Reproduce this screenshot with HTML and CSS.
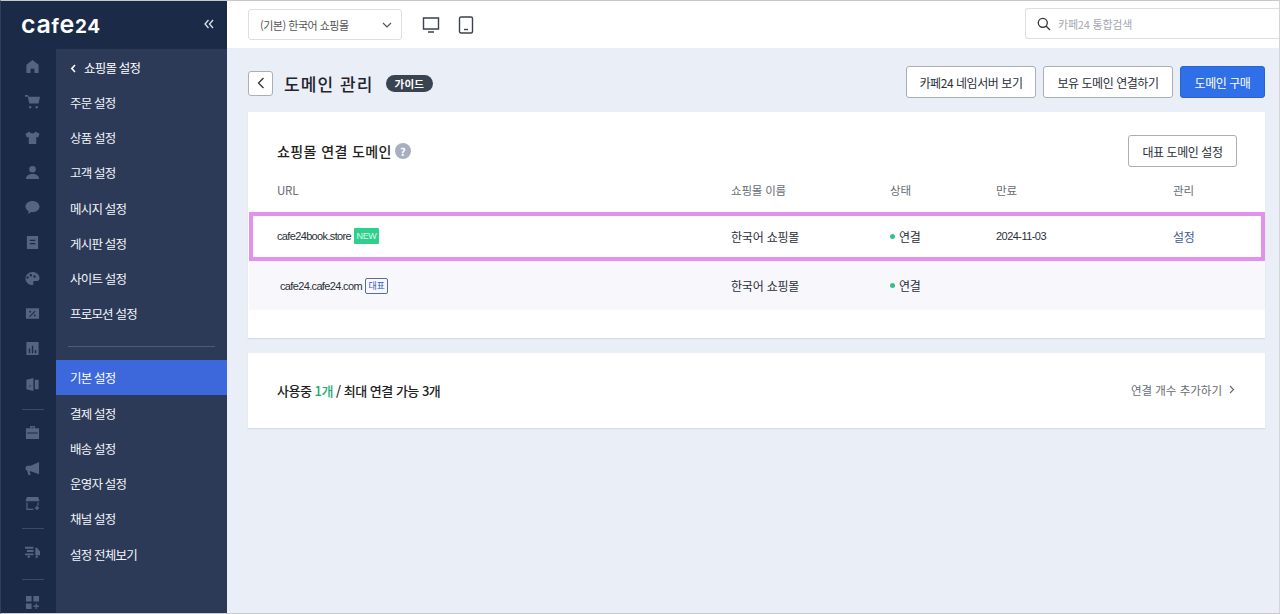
FILE: index.html
```html
<!DOCTYPE html>
<html lang="ko">
<head>
  <meta charset="UTF-8">
  <meta name="viewport" content="width=device-width, initial-scale=1.0">
  <title>도메인 관리</title>
  <link rel="stylesheet" href="styles.css">
</head>
<body>
  <div class="app">
    <aside class="sidebar">
      <div class="brand">
        <span class="logo">ca<i>f</i>e<i>24</i></span>
        <svg class="collapse" width="10" height="10" viewBox="0 0 10 10"><path d="M4.500 1 1 5l3.500 4M9 1 5.500 5 9 9" fill="none" stroke="#dfe4ee" stroke-width="1.300"/></svg>
      </div>
      <div class="side-body">
        <div class="rail">
          <svg class="ri" viewBox="0 0 16 16"><path d="M8 1 1.500 6v9H6v-4.500h4V15h4.500V6z"/></svg>
          <svg class="ri" viewBox="0 0 16 16"><path d="M0 1h3l1 2h12l-1.500 7H4.500L3 3H0z"/><circle cx="5.500" cy="14" r="1.300"/><circle cx="12.500" cy="14" r="1.300"/></svg>
          <svg class="ri" viewBox="0 0 16 16"><path d="M5 1.500 0.500 4 2 8l2-.5V15h8V7.500L14 8l1.500-4L11 1.500C10.500 3 9.500 3.500 8 3.500S5.500 3 5 1.500z"/></svg>
          <svg class="ri" viewBox="0 0 16 16"><circle cx="8" cy="4.500" r="3.500"/><path d="M1 15c0-4 3-5.500 7-5.500s7 1.500 7 5.500z"/></svg>
          <svg class="ri" viewBox="0 0 16 16"><path d="M8 1C3.800 1 .5 3.500.5 7c0 2.200 1.300 4 3.300 5l-.3 3 3.200-2.100c.4.100.9.100 1.300.1 4.200 0 7.500-2.600 7.500-6S12.200 1 8 1z"/></svg>
          <svg class="ri" viewBox="0 0 16 16"><path fill-rule="evenodd" d="M2 1h12v14H2zM5 5v1.300h6V5zM5 8.500v1.300h6V8.500z"/></svg>
          <svg class="ri" viewBox="0 0 16 16"><path fill-rule="evenodd" d="M8 1C3.800 1 .5 4.200.5 8s3.300 7 7 7c1.500 0 1.800-1 1.300-2-.5-1.200.2-2.300 1.500-2.300h2.200c1.700 0 3-1 3-3C15.500 3.800 12.200 1 8 1zM4 7a1.300 1.300 0 1 1 0-.1zM7.500 4.500a1.300 1.300 0 1 1 0-.1zM11.500 6a1.300 1.300 0 1 1 0-.1z"/></svg>
          <svg class="ri" viewBox="0 0 16 16"><path fill-rule="evenodd" d="M1 2.500h14v11H1zM10.500 5 4.500 11l.8.800 6-6zM5.500 5a1 1 0 1 0 0 2 1 1 0 0 0 0-2zM10.500 9a1 1 0 1 0 0 2 1 1 0 0 0 0-2z"/></svg>
          <svg class="ri" viewBox="0 0 16 16"><path fill-rule="evenodd" d="M1.500 1h13v14h-13zM4 8v5h1.500V8zM7.300 5v8h1.500V5zM10.500 9.500V13H12V9.500z"/></svg>
          <svg class="ri" viewBox="0 0 16 16"><path fill-rule="evenodd" d="M1.500 3 9 1v14l-7.500-2zM4 6.500l1.500 2L4 10.500h1.200l.9-1.300.9 1.300h-.1zM10.500 3h4v10h-4z"/></svg>
          <span class="rail-line"></span>
          <svg class="ri tight" viewBox="0 0 16 16"><path fill-rule="evenodd" d="M5.500 1h5v2.500H15V15H1V3.500h4.500zM7 2.500v1h2v-1zM2.500 8v1h11V8z"/></svg>
          <svg class="ri" viewBox="0 0 16 16"><path d="M15 1v13L6 11H5l1 4H3.500L2.300 10.500C1.300 10 .5 9 .5 7.500S1.500 5 3 5h3z"/></svg>
          <svg class="ri" viewBox="0 0 16 16"><path d="M2 1h12l1.500 4.500h-15zM1.500 7h1.300v6.500H9V15H1.500zM13.200 7h1.300v3h-1.300zM12 10.500h1.500V12H15v1.500h-1.500V15H12v-1.500h-1.500V12H12z"/></svg>
          <span class="rail-line"></span>
          <svg class="ri tight" viewBox="0 0 16 16"><path d="M0 3h9v2H0zM2 6.500h7v2H2zM0 10h9v2H0zM11 4h2l3 4v4h-5z"/><circle cx="4" cy="13.500" r="1.300"/><circle cx="12.500" cy="13.500" r="1.300"/></svg>
          <span class="rail-line last"></span>
          <svg class="ri tight" viewBox="0 0 16 16"><path d="M1 1h6v6H1zM9 1h6v6H9zM1 9h6v6H1zM11.300 9h1.400v2.300H15v1.400h-2.300V15h-1.400v-2.300H9v-1.400h2.300z"/></svg>
        </div>
        <nav class="submenu">
          <a class="sub-title" href="#"><svg width="7" height="9" viewBox="0 0 7 9"><path d="M5 1 1.800 4.500 5 8" fill="none" stroke="#fff" stroke-width="1.600"/></svg>쇼핑몰 설정</a>
          <a href="#">주문 설정</a>
          <a href="#">상품 설정</a>
          <a href="#">고객 설정</a>
          <a href="#">메시지 설정</a>
          <a href="#">게시판 설정</a>
          <a href="#">사이트 설정</a>
          <a href="#">프로모션 설정</a>
          <div class="sub-line"></div>
          <a class="active" href="#">기본 설정</a>
          <a href="#">결제 설정</a>
          <a href="#">배송 설정</a>
          <a href="#">운영자 설정</a>
          <a href="#">채널 설정</a>
          <a href="#">설정 전체보기</a>
        </nav>
      </div>
    </aside>

    <div class="main">
      <header class="topbar">
        <div class="shop-select">
          <span>(기본) 한국어 쇼핑몰</span>
          <svg width="10" height="6" viewBox="0 0 10 6"><path d="M1 1l4 4 4-4" fill="none" stroke="#555" stroke-width="1.200"/></svg>
        </div>
        <svg class="device" width="18" height="18" viewBox="0 0 18 18"><path d="M1.500 2h15v11h-15zM6 16h6" fill="none" stroke="#39424f" stroke-width="1.400"/></svg>
        <svg class="device" width="16" height="18" viewBox="0 0 16 18"><rect x="1.500" y="1" width="13" height="16" rx="1.500" fill="none" stroke="#39424f" stroke-width="1.400"/><path d="M6 13.500h4" stroke="#39424f" stroke-width="1.400"/></svg>
        <div class="search">
          <svg width="14" height="14" viewBox="0 0 14 14"><circle cx="5.800" cy="5.800" r="4.500" fill="none" stroke="#333" stroke-width="1.300"/><path d="M9 9l4 4" stroke="#333" stroke-width="1.300"/></svg>
          <span>카페24 통합검색</span>
        </div>
      </header>

      <main class="content">
        <div class="page-head">
          <button class="back"><svg width="8" height="12" viewBox="0 0 8 12"><path d="M6.500 1 1.500 6l5 5" fill="none" stroke="#333" stroke-width="1.300"/></svg></button>
          <h1>도메인 관리</h1>
          <span class="guide">가이드</span>
          <div class="head-actions">
            <a class="btn" href="#">카페24 네임서버 보기</a>
            <a class="btn" href="#">보유 도메인 연결하기</a>
            <a class="btn primary" href="#">도메인 구매</a>
          </div>
        </div>

        <section class="card domains">
          <div class="card-head">
            <h2>쇼핑몰 연결 도메인</h2>
            <span class="help">?</span>
            <a class="btn small" href="#">대표 도메인 설정</a>
          </div>
          <div class="row thead">
            <span>URL</span><span>쇼핑몰 이름</span><span>상태</span><span>만료</span><span>관리</span>
          </div>
          <div class="row picked">
            <span class="url">cafe24book.store<em class="tag-new">NEW</em></span>
            <span>한국어 쇼핑몰</span>
            <span class="state">연결</span>
            <span class="date">2024-11-03</span>
            <a class="manage" href="#">설정</a>
          </div>
          <div class="row alt">
            <span class="url shifted">cafe24.cafe24.com<em class="tag-main">대표</em></span>
            <span>한국어 쇼핑몰</span>
            <span class="state">연결</span>
            <span></span>
            <span></span>
          </div>
        </section>

        <section class="card usage">
          <p>사용중 <b>1개</b> / 최대 연결 가능 3개</p>
          <a class="more" href="#">연결 개수 추가하기<svg width="6" height="9" viewBox="0 0 6 9"><path d="M1 1l3.500 3.500L1 8" fill="none" stroke="#666" stroke-width="1.100"/></svg></a>
        </section>
      </main>
    </div>
  </div>
</body>
</html>
```

FILE: styles.css
```css
* {
  box-sizing: border-box;
}
html, body {
  margin: 0;
  height: 100%;
  overflow: hidden;
}
body {
  font-family: "Noto Sans CJK KR", "Noto Sans", sans-serif;
  font-size: 12px;
  color: #222;
  background: #eaeef6;
}
a {
  text-decoration: none;
  color: inherit;
}
.app {
  display: flex;
  height: 614px;
  border-top: 1px solid #c9c9c9;
  border-right: 1px solid #d5d5d5;
  border-bottom: 1px solid #c9c9c9;
  border-left: 1px solid #30405c;
}

/* sidebar */
.sidebar {
  width: 226px;
  flex: none;
  display: flex;
  flex-direction: column;
  background: #1b2a47;
}
.brand {
  height: 46px;
  margin-bottom: 2px;
  flex: none;
  display: flex;
  align-items: center;
  justify-content: space-between;
  padding: 0 13px 0 20px;
}
.logo {
  font-family: "Inter", sans-serif;
  font-size: 25px;
  font-weight: 600;
  letter-spacing: 0.6px;
  line-height: 1;
  color: #fff;
}
.logo i {
  font-size: 19px;
  font-style: normal;
  font-weight: 700;
}
.side-body {
  flex: 1;
  display: flex;
  min-height: 0;
}
.rail {
  width: 55px;
  flex: none;
  display: flex;
  flex-direction: column;
  align-items: center;
  padding: 10px 0 0 8px;
  gap: 20.300px;
  overflow: hidden;
}
.ri {
  width: 15px;
  height: 15px;
  flex: none;
  fill: #56647f;
}
.ri.tight {
  margin-top: -1px;
}
.rail-line {
  width: 22px;
  height: 1px;
  flex: none;
  margin: -3px 0 -4px;
  background: #3c4a66;
}
.rail-line.last {
  margin-top: -1px;
}
.submenu {
  flex: 1;
  display: flex;
  flex-direction: column;
  padding-top: 0.500px;
  background: #2c3a58;
}
.submenu a {
  height: 35.200px;
  flex: none;
  display: flex;
  align-items: center;
  padding: 2px 0 0 14px;
  color: #f3f5f9;
  font-size: 12.500px;
  letter-spacing: -0.8px;
  line-height: 1;
}
.submenu .sub-title {
  gap: 7px;
  color: #fff;
}
.submenu .active {
  height: 35px;
  margin-bottom: 1px;
  padding-top: 3px;
  background: #3c68dc;
  color: #fff;
}
.sub-line {
  height: 1px;
  flex: none;
  margin: 14.500px 12px 13px;
  background: #4f5c78;
}

/* top bar */
.main {
  flex: 1;
  min-width: 0;
  display: flex;
  flex-direction: column;
}
.topbar {
  height: 47px;
  flex: none;
  display: flex;
  align-items: center;
  padding-left: 21px;
  background: #fff;
}
.shop-select {
  width: 154px;
  height: 31px;
  display: flex;
  align-items: center;
  justify-content: space-between;
  padding: 0 9px 0 11px;
  margin-right: 20px;
  border: 1px solid #dcdfe6;
  border-radius: 3px;
  font-size: 11px;
  letter-spacing: -0.5px;
  color: #555;
}
.device {
  margin-right: 18px;
}
.search {
  width: 254px;
  height: 31px;
  margin-left: auto;
  display: flex;
  align-items: center;
  gap: 7px;
  padding-left: 11px;
  margin-top: -2px;
  border: 1px solid #dcdfe6;
  border-right: 0;
  border-radius: 3px 0 0 3px;
  font-size: 11px;
  letter-spacing: -0.2px;
  color: #a4a8b0;
}

/* page */
.content {
  flex: 1;
  padding: 18px 14px 0 21px;
}
.page-head {
  height: 32px;
  display: flex;
  align-items: center;
  margin-bottom: 14px;
}
.back {
  width: 25px;
  height: 25px;
  display: flex;
  align-items: center;
  justify-content: center;
  padding: 0;
  margin: 2px 11px 0 0;
  border: 1px solid #a9aeb8;
  border-radius: 3px;
  background: #fff;
}
h1 {
  margin: 2px 12px 0 0;
  font-size: 17px;
  font-weight: 500;
  letter-spacing: 1.100px;
  color: #1f2430;
}
.guide {
  height: 17px;
  margin-top: 2px;
  padding: 0 9px;
  border-radius: 9px;
  background: #3a4350;
  color: #fff;
  font-size: 10.500px;
  font-weight: 700;
  line-height: 17px;
  letter-spacing: 0.2px;
}
.head-actions {
  margin-left: auto;
  display: flex;
  gap: 7px;
}
.btn {
  height: 32px;
  display: flex;
  align-items: center;
  justify-content: center;
  width: 130px;
  border: 1px solid #a9aeb8;
  border-radius: 3px;
  background: #fff;
  font-size: 12px;
  letter-spacing: -0.45px;
  color: #2a2f38;
}
.btn.primary {
  width: 85px;
  background: #2f6fe8;
  border-color: #2a62d0;
  color: #fff;
}
.btn.small {
  width: 109px;
  margin-left: auto;
}

/* cards */
.card {
  background: #fff;
  box-shadow: 0 1px 1px rgba(80, 90, 120, 0.12);
}
.domains {
  height: 226px;
  margin-bottom: 15px;
}
.card-head {
  display: flex;
  align-items: center;
  padding: 23px 28px 0 29px;
}
h2 {
  margin: 0 3px 0 0;
  font-size: 14px;
  font-weight: 500;
  letter-spacing: 0.4px;
  color: #222;
}
.help {
  width: 16px;
  height: 16px;
  border-radius: 50%;
  background: #a9afc0;
  color: #fff;
  font-size: 11px;
  font-weight: 700;
  line-height: 16px;
  text-align: center;
}
.row {
  display: grid;
  grid-template-columns: 454px 159px 106px 177px 1fr;
  align-items: center;
  padding-left: 29px;
  font-size: 12px;
  letter-spacing: -0.2px;
  color: #2a2f38;
}
.thead {
  height: 45px;
  padding-top: 0;
  font-size: 11.500px;
  color: #666c76;
}
.picked {
  height: 49px;
  margin: 0 0 0 1px;
  padding: 0 0 1px 24px;
  border: 4px solid #e291ef;
  background: #fff;
}
.alt {
  height: 49px;
  margin-left: 1px;
  padding-left: 28px;
  background: #f8f8fc;
}
.url,
.date {
  font-family: "Liberation Sans", sans-serif;
  font-size: 11px;
  letter-spacing: -0.55px;
}
.url {
  display: flex;
  align-items: center;
  letter-spacing: -0.65px;
}
.url.shifted {
  padding-left: 3px;
}
.tag-new {
  margin-left: 3px;
  width: 25px;
  height: 16px;
  border-radius: 1px;
  background: #2fd08c;
  color: #d9fbe9;
  font-size: 9px;
  font-style: normal;
  letter-spacing: -0.3px;
  line-height: 16px;
  text-align: center;
}
.tag-main {
  margin-left: 3px;
  width: 23px;
  height: 16px;
  border: 1px solid #5a6d99;
  border-radius: 2px;
  color: #3a62c4;
  font-family: "Noto Sans CJK KR", sans-serif;
  font-size: 9px;
  font-style: normal;
  letter-spacing: -0.3px;
  line-height: 14px;
  text-align: center;
}
.state {
  display: flex;
  align-items: center;
  gap: 4px;
}
.state::before {
  content: "";
  width: 5px;
  height: 5px;
  border-radius: 50%;
  background: #36c08c;
}
.manage {
  color: #3f5c94;
}
.usage {
  height: 75px;
  display: flex;
  align-items: center;
  justify-content: space-between;
  padding: 0 30px 0 29px;
}
.usage p {
  margin: 0;
  font-size: 13px;
  font-weight: 500;
  letter-spacing: -0.5px;
}
.usage b {
  font-weight: 500;
  color: #1fa873;
}
.more {
  display: flex;
  align-items: center;
  gap: 7px;
  margin-top: -2px;
  font-size: 11.500px;
  color: #666c76;
}
```
